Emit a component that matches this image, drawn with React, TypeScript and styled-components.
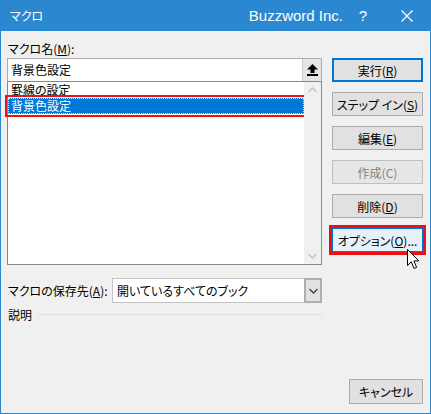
import React from 'react';
import styled, { createGlobalStyle, css } from 'styled-components';

const GlobalStyle = createGlobalStyle`
  html, body {
    margin: 0;
    padding: 0;
    background: #f0f0f0;
  }
  body {
    font-family: "Noto Sans CJK JP", "Noto Sans", sans-serif;
    font-size: 12px;
    font-feature-settings: "palt";
    color: #000;
  }
`;

const Window = styled.div`
  position: relative;
  box-sizing: border-box;
  width: 431px;
  height: 414px;
  display: flex;
  flex-direction: column;
  background: #f0f0f0;
  border: 1px solid #2b88d0;
  border-top: none;
  overflow: hidden;
`;

const TitleBar = styled.div`
  display: flex;
  align-items: center;
  height: 31px;
  margin: 0 -1px;
  padding-left: 10px;
  background: #2b88d0;
  color: #fff;
`;

const Title = styled.span`
  flex: 1;
  font-size: 12px;
  line-height: 31px;
`;

const Brand = styled.span`
  font-family: "Liberation Sans", Arial, sans-serif;
  font-size: 15px;
`;

const TitleButton = styled.span<{ $w: number }>`
  width: ${(p) => p.$w}px;
  display: flex;
  justify-content: center;
  align-items: center;
  font-family: "Liberation Sans", Arial, sans-serif;
  font-size: 15px;
  line-height: 31px;
`;

const Body = styled.div`
  flex: 1;
  display: flex;
  flex-direction: column;
  padding: 8px 7px 9px 6px;
`;

const Main = styled.div`
  display: grid;
  grid-template-columns: 315px 91px;
  column-gap: 10px;
`;

const LeftColumn = styled.div`
  display: flex;
  flex-direction: column;
`;

const FieldLabel = styled.div`
  height: 19px;
  line-height: 19px;
  padding-left: 1px;
`;

const ComboInput = styled.div`
  box-sizing: border-box;
  display: flex;
  height: 23px;
  background: #fff;
  border: 1px solid #abadb3;
  border-bottom: none;
`;

const ComboText = styled.div`
  flex: 1;
  padding-left: 3px;
  line-height: 21px;
`;

const UpButton = styled.div`
  box-sizing: border-box;
  width: 19px;
  height: 22px;
  display: flex;
  align-items: center;
  justify-content: center;
  background: #e5e5e5;
  border-left: 1px solid #cfcfcf;
`;

const ListBox = styled.div`
  box-sizing: border-box;
  display: flex;
  height: 184px;
  background: #fff;
  border: 1px solid #828790;
`;

const ListItems = styled.div`
  flex: 1;
  display: flex;
  flex-direction: column;
`;

const ListItem = styled.div<{ $selected?: boolean }>`
  box-sizing: border-box;
  height: 16px;
  line-height: 14px;
  padding-left: 2px;
  border: 1px solid transparent;
  ${(p) =>
    p.$selected &&
    css`
      background: #0078d7;
      color: #fff;
      border: 1px dotted #cfe4f7;
      outline: 2px solid #ee1111;
      outline-offset: 1px;
    `}
`;

const ScrollBar = styled.div`
  width: 17px;
  display: flex;
  flex-direction: column;
  justify-content: space-between;
  align-items: center;
  background: #f0f0f0;
  padding: 5px 0;
`;

const SaveRow = styled.div`
  display: flex;
  align-items: center;
  height: 25px;
  margin-top: 13px;
`;

const SaveLabel = styled.div`
  width: 104px;
  padding-left: 1px;
`;

const Select = styled.div`
  box-sizing: border-box;
  flex: 1;
  display: flex;
  height: 25px;
  background: #fff;
  border: 1px solid #c3c3c3;
`;

const SelectText = styled.div`
  flex: 1;
  padding-left: 4px;
  line-height: 23px;
`;

const DropButton = styled.div`
  box-sizing: border-box;
  width: 18px;
  display: flex;
  align-items: center;
  justify-content: center;
  background: #e1e1e1;
  border: 2px solid #aeaeae;
  margin: -1px -1px -1px 0;
`;

const DescRow = styled.div`
  display: flex;
  align-items: center;
  gap: 6px;
  margin-top: 4px;
  height: 15px;
  padding-left: 1px;
`;

const DescLine = styled.div`
  flex: 1;
  height: 1px;
  background: #dcdcdc;
`;

const ButtonColumn = styled.div`
  display: flex;
  flex-direction: column;
  gap: 10px;
  padding-top: 19px;
`;

const Button = styled.div<{ $variant?: 'default' | 'disabled' | 'hot' }>`
  box-sizing: border-box;
  height: 24px;
  display: flex;
  align-items: center;
  justify-content: center;
  background: #e1e1e1;
  border: 1px solid #adadad;
  white-space: nowrap;
  ${(p) =>
    p.$variant === 'default' &&
    css`
      border: 2px solid #0078d7;
    `}
  ${(p) =>
    p.$variant === 'disabled' &&
    css`
      color: #838383;
      background: #e6e6e6;
      border-color: #bfbfbf;
    `}
  ${(p) =>
    p.$variant === 'hot' &&
    css`
      background: #e5f1fb;
      border-color: #0078d7;
      outline: 3px solid #ee1111;
      outline-offset: 0;
    `}
`;

const Footer = styled.div`
  margin-top: auto;
  display: flex;
  justify-content: flex-end;
`;

const CancelButton = styled(Button)`
  width: 74px;
  height: 25px;
`;

const Cursor = styled.svg`
  position: absolute;
  left: 406px;
  top: 249px;
`;

const UpIcon = () => (
  <svg width="11" height="12" viewBox="0 0 11 12">
    <path d="M5.5 0 L11 5.5 L7.5 5.5 L7.5 9 L3.5 9 L3.5 5.5 L0 5.5 Z" fill="#000" />
    <rect x="0" y="10" width="11" height="2" fill="#000" />
  </svg>
);

const CloseIcon = () => (
  <svg width="12" height="12" viewBox="0 0 12 12">
    <path d="M0.5 0.5 L11.5 11.5 M11.5 0.5 L0.5 11.5" stroke="#fff" strokeWidth="1.2" />
  </svg>
);

const Chevron = ({ up, color }: { up?: boolean; color: string }) => (
  <svg width="9" height="6" viewBox="0 0 9 6">
    <path
      d={up ? 'M0.5 5 L4.5 1 L8.5 5' : 'M0.5 1 L4.5 5 L8.5 1'}
      fill="none"
      stroke={color}
      strokeWidth="1.3"
    />
  </svg>
);

export default function App() {
  return (
    <>
      <GlobalStyle />
      <Window>
        <TitleBar>
          <Title>マクロ</Title>
          <Brand>Buzzword Inc.</Brand>
          <TitleButton $w={40}>?</TitleButton>
          <TitleButton $w={48}>
            <CloseIcon />
          </TitleButton>
        </TitleBar>
        <Body>
          <Main>
            <LeftColumn>
              <FieldLabel>
                マクロ名(<u>M</u>):
              </FieldLabel>
              <ComboInput>
                <ComboText>背景色設定</ComboText>
                <UpButton>
                  <UpIcon />
                </UpButton>
              </ComboInput>
              <ListBox>
                <ListItems>
                  <ListItem>罫線の設定</ListItem>
                  <ListItem $selected>背景色設定</ListItem>
                </ListItems>
                <ScrollBar>
                  <Chevron up color="#c2c2c2" />
                  <Chevron color="#c2c2c2" />
                </ScrollBar>
              </ListBox>
              <SaveRow>
                <SaveLabel>
                  マクロの保存先(<u>A</u>):
                </SaveLabel>
                <Select>
                  <SelectText>開いているすべてのブック</SelectText>
                  <DropButton>
                    <Chevron color="#404040" />
                  </DropButton>
                </Select>
              </SaveRow>
              <DescRow>
                <span>説明</span>
                <DescLine />
              </DescRow>
            </LeftColumn>
            <ButtonColumn>
              <Button $variant="default">
                実行(<u>R</u>)
              </Button>
              <Button>
                ステップ イン(<u>S</u>)
              </Button>
              <Button>
                編集(<u>E</u>)
              </Button>
              <Button $variant="disabled">作成(C)</Button>
              <Button>
                削除(<u>D</u>)
              </Button>
              <Button $variant="hot">
                オプション(<u>O</u>)...
              </Button>
            </ButtonColumn>
          </Main>
          <Footer>
            <CancelButton>キャンセル</CancelButton>
          </Footer>
        </Body>
        <Cursor width="13" height="21" viewBox="0 0 13 21">
          <path
            d="M0.5 0.5 L0.5 16.5 L4.3 12.8 L7 19.5 L9.6 18.4 L6.9 11.9 L11.8 11.9 Z"
            fill="#fff"
            stroke="#000"
            strokeWidth="1"
            strokeLinejoin="miter"
          />
        </Cursor>
      </Window>
    </>
  );
}
